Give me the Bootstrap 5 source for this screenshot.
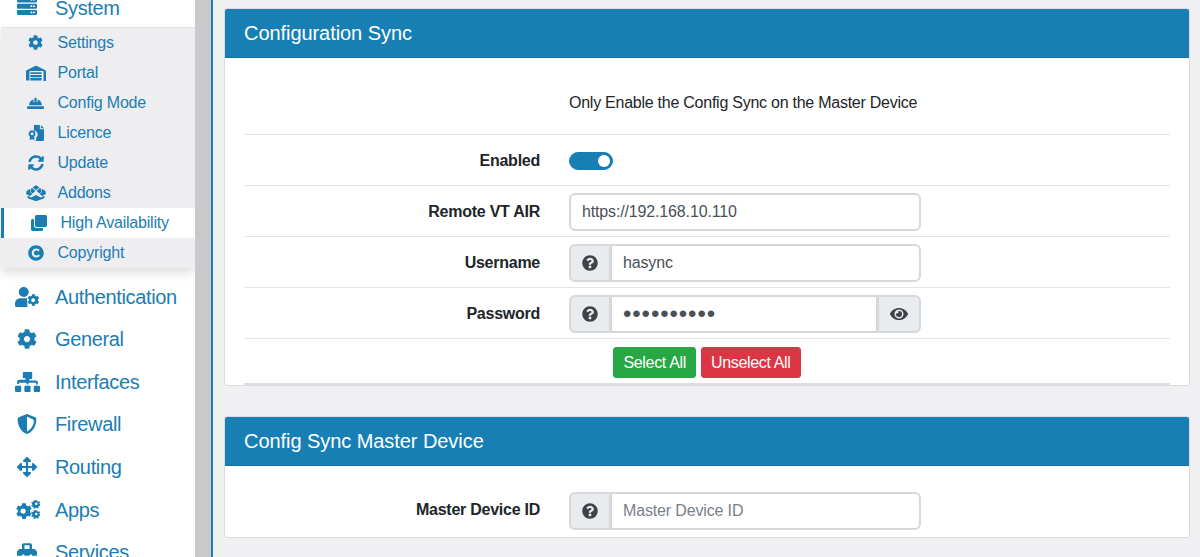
<!DOCTYPE html>
<html lang="en">
<head>
<meta charset="utf-8">
<title>Configuration Sync</title>
<link rel="stylesheet" href="https://cdn.jsdelivr.net/npm/bootstrap@5.3.0/dist/css/bootstrap.min.css">
<style>
html,body{height:557px;overflow:hidden}
body{font-family:"Liberation Sans",Arial,sans-serif;background:#f0f0f2;color:#212529}
.shell{height:557px;overflow:hidden}
.side{width:195px;flex:none;background:#fff;margin-top:-13px;height:570px}
.gutter{width:16px;flex:none;background:#c9c9cc}
.content{flex:1;min-width:0;border-left:2px solid #1b7db3;background:#f0f0f2;padding:8px 10px 0 11px}
.mainlink{height:42.6px;font-size:20px;color:#1b7db3;text-decoration:none;padding-left:14px;letter-spacing:-.35px}
.mainlink .ico{width:26px;margin-right:15px}
.ico{display:flex;align-items:center;justify-content:center;flex:none}
svg{fill:currentColor;display:block;flex:none}
.submenu{background:#eeeef0;margin:-3px 0 7.8px 1px;box-shadow:0 5px 10px rgba(0,0,0,.13);border-top:1px solid #e2e2e4}
.sublink{height:30px;font-size:16px;color:#1b7db3;text-decoration:none;padding-left:25px;letter-spacing:-.2px}
.sublink .ico{width:19px;margin-right:12.5px}
.sublink.active-item{background:#fff;border-left:3px solid #1b7db3;padding-left:25px}
.panel{border:1px solid #dcdcde;border-radius:3px;margin-bottom:30px}
.panel-head{background:#187fb5;color:#fff;font-size:20px;height:49px;padding:0 19px;border-bottom:1px solid #146c9c;border-radius:2px 2px 0 0;display:flex;align-items:center;letter-spacing:-.06px}
.panel-inner{padding:0 19px}
.form-line{border-bottom:1px solid #e4e4e6;height:51px;margin:0;padding-top:1px}
.form-line.tall{height:77px;padding-top:13px}
.form-line.btns{height:46px;border-bottom:2px solid #dedee0;padding-top:8px}
.form-line.last{height:71px;border-bottom:0;padding-top:26px;align-items:flex-start}
.lbl{width:296px;flex:none;font-weight:700;text-align:right;font-size:16px;letter-spacing:-.25px;margin-right:29px}
.last .lbl{line-height:36px}
.ctl{width:352px;flex:none}
.note{font-size:16px;letter-spacing:-.25px;padding-left:325px}
.form-control,.input-group-text{font-size:16px;height:38px;border-color:#d6d8db;border-width:2px;color:#495057;font-family:inherit}
.form-control{padding-left:11px;letter-spacing:-.15px}
.form-control::placeholder{color:#7a8087}
.input-group-text{background:#e9ecef;color:#3d4349;padding:0;width:42px;justify-content:center}
.input-group-text.wide{width:44px}
.form-control.dots{letter-spacing:.9px;font-size:24px;padding-top:0;padding-bottom:0}
.form-switch .form-check-input{width:44px;height:18px;margin:0;float:none;background-color:#187fb5;border-color:#187fb5}
.form-switch{padding:0;margin:0;min-height:0}
.act{font-size:16px;height:31px;padding:0 9px;line-height:29px;letter-spacing:-.33px;border-radius:3px}
.btnrow{gap:5px}
.btn-success{background:#28a745;border-color:#28a745}
.btn-danger{background:#dc3545;border-color:#dc3545}
</style>
</head>
<body>
<div class="shell d-flex">
<nav class="side">
  <a class="mainlink d-flex align-items-center" href="#"><span class="ico"><svg width="20" height="20" viewBox="0 48 512 512"><path d="M480 160H32c-17.673 0-32-14.327-32-32V64c0-17.673 14.327-32 32-32h448c17.673 0 32 14.327 32 32v64c0 17.673-14.327 32-32 32zm-48-88c-13.255 0-24 10.745-24 24s10.745 24 24 24 24-10.745 24-24-10.745-24-24-24zm-64 0c-13.255 0-24 10.745-24 24s10.745 24 24 24 24-10.745 24-24-10.745-24-24-24zm112 248H32c-17.673 0-32-14.327-32-32v-64c0-17.673 14.327-32 32-32h448c17.673 0 32 14.327 32 32v64c0 17.673-14.327 32-32 32zm-48-88c-13.255 0-24 10.745-24 24s10.745 24 24 24 24-10.745 24-24-10.745-24-24-24zm-64 0c-13.255 0-24 10.745-24 24s10.745 24 24 24 24-10.745 24-24-10.745-24-24-24zm112 248H32c-17.673 0-32-14.327-32-32v-64c0-17.673 14.327-32 32-32h448c17.673 0 32 14.327 32 32v64c0 17.673-14.327 32-32 32zm-48-88c-13.255 0-24 10.745-24 24s10.745 24 24 24 24-10.745 24-24-10.745-24-24-24zm-64 0c-13.255 0-24 10.745-24 24s10.745 24 24 24 24-10.745 24-24-10.745-24-24-24z"/></svg></span>System</a>
  <div class="submenu">
    <a class="sublink d-flex align-items-center" href="#"><span class="ico"><svg width="15" height="15" viewBox="0 0 512 512"><path d="M487.4 315.7l-42.6-24.6c4.3-23.2 4.3-47 0-70.2l42.6-24.6c4.9-2.8 7.1-8.6 5.5-14-11.1-35.6-30-67.8-54.7-94.6-3.8-4.1-10-5.1-14.8-2.3L380.8 110c-17.9-15.4-38.5-27.3-60.8-35.1V25.8c0-5.6-3.9-10.5-9.4-11.7-36.7-8.2-74.3-7.8-109.2 0-5.5 1.2-9.4 6.1-9.4 11.7V75c-22.2 7.9-42.8 19.8-60.8 35.1L88.7 85.5c-4.9-2.8-11-1.9-14.8 2.3-24.7 26.7-43.6 58.9-54.7 94.6-1.7 5.4.6 11.2 5.5 14L67.3 221c-4.3 23.2-4.3 47 0 70.2l-42.6 24.6c-4.9 2.8-7.1 8.6-5.5 14 11.1 35.6 30 67.8 54.7 94.6 3.8 4.1 10 5.1 14.8 2.3l42.6-24.6c17.9 15.4 38.5 27.3 60.8 35.1v49.2c0 5.6 3.9 10.5 9.4 11.7 36.7 8.2 74.3 7.8 109.2 0 5.5-1.2 9.4-6.1 9.4-11.7v-49.2c22.2-7.9 42.8-19.8 60.8-35.1l42.6 24.6c4.9 2.8 11 1.9 14.8-2.3 24.7-26.7 43.6-58.9 54.7-94.6 1.5-5.5-.7-11.3-5.6-14.1zM256 336c-44.1 0-80-35.9-80-80s35.9-80 80-80 80 35.9 80 80-35.9 80-80 80z"/></svg></span>Settings</a>
    <a class="sublink d-flex align-items-center" href="#"><span class="ico"><svg width="20" height="16" viewBox="0 0 640 512"><path d="M20 170 290 30q30-14 60 0l270 140q20 10 20 30v292q0 20-20 20h-60V210q0-20-20-20H130q-20 0-20 20v282H20q-20 0-20-20V200q0-20 20-30z"/><path d="M140 230h360v60H140zm0 90h360v60H140zm0 90h360v82H140z"/></svg></span>Portal</a>
    <a class="sublink d-flex align-items-center" href="#"><span class="ico"><svg width="17" height="14" viewBox="0 0 512 400"><path d="M64 270c0-90 50-160 130-185v95h30V60q0-16 16-16h32q16 0 16 16v120h30V85c80 25 130 95 130 185zM24 300h464q24 0 24 24v30q0 24-24 24H24q-24 0-24-24v-30q0-24 24-24z"/></svg></span>Config Mode</a>
    <a class="sublink d-flex align-items-center" href="#"><span class="ico"><svg width="16" height="16" viewBox="0 0 512 512"><path fill-rule="evenodd" d="M190 0h190v120q0 16 16 16h116v340q0 36-36 36H220q40-10 40-40v-70c30-25 50-60 50-100 0-70-50-120-120-130zM412 0l100 100H412zM130 170a110 110 0 0 1 70 195v120l-70-40-70 40V365a110 110 0 0 1 70-195zm0 60a50 50 0 1 0 0 100 50 50 0 0 0 0-100z"/></svg></span>Licence</a>
    <a class="sublink d-flex align-items-center" href="#"><span class="ico"><svg width="16" height="16" viewBox="0 0 512 512"><path d="M370.72 133.28C339.458 104.008 298.888 87.962 255.848 88c-77.458.068-144.328 53.178-162.791 126.85-1.344 5.363-6.122 9.15-11.651 9.15H24.103c-7.498 0-13.194-6.807-11.807-14.176C33.933 94.924 134.813 8 256 8c66.448 0 126.791 26.136 171.315 68.685L463.03 40.97C478.149 25.851 504 36.559 504 57.941V192c0 13.255-10.745 24-24 24H345.941c-21.382 0-32.09-25.851-16.971-40.971l41.75-41.749zM32 296h134.059c21.382 0 32.09 25.851 16.971 40.971l-41.75 41.75c31.262 29.273 71.835 45.319 114.876 45.28 77.418-.07 144.315-53.144 162.787-126.849 1.344-5.363 6.122-9.15 11.651-9.15h57.304c7.498 0 13.194 6.807 11.807 14.176C478.067 417.076 377.187 504 256 504c-66.448 0-126.791-26.136-171.315-68.685L48.97 471.03C33.851 486.149 8 475.441 8 454.059V320c0-13.255 10.745-24 24-24z"/></svg></span>Update</a>
    <a class="sublink d-flex align-items-center" href="#"><span class="ico"><svg width="20" height="16" viewBox="0 0 640 512"><path d="M320 170 210 70 320 10l110 60zM190 90l110 100-80 70-70-30 10-100zM450 90 340 190l80 70 70-30-10-100zM20 190l110-70 10 120 70 40-80 70L0 290zM620 190l-110-70-10 120-70 40 80 70 130-60zM50 340l120 60 150-80 150 80 120-60v80L340 510h-40L50 420z"/></svg></span>Addons</a>
    <a class="sublink active-item d-flex align-items-center" href="#"><span class="ico"><svg width="16" height="16" viewBox="0 0 512 512"><path d="M464 0c26.51 0 48 21.49 48 48v288c0 26.51-21.49 48-48 48H176c-26.51 0-48-21.49-48-48V48c0-26.51 21.49-48 48-48h288M176 416c-44.112 0-80-35.888-80-80V128H48c-26.51 0-48 21.49-48 48v288c0 26.51 21.49 48 48 48h288c26.51 0 48-21.49 48-48v-48H176z"/></svg></span>High Availability</a>
    <a class="sublink d-flex align-items-center" href="#"><span class="ico"><svg width="16" height="16" viewBox="0 0 512 512"><path d="M256 8C119.033 8 8 119.033 8 256s111.033 248 248 248 248-111.033 248-248S392.967 8 256 8zm117.134 346.753c-1.592 1.867-39.776 45.731-109.851 45.731-84.692 0-144.484-63.26-144.484-145.567 0-81.303 62.004-143.401 143.762-143.401 66.957 0 101.965 37.315 103.422 38.904a12 12 0 0 1 1.238 14.623l-22.38 34.655c-4.049 6.267-12.774 7.351-18.234 2.295-.233-.214-26.529-23.88-61.88-23.88-46.116 0-73.916 33.575-73.916 76.082 0 39.602 25.514 79.692 74.277 79.692 38.697 0 65.28-28.338 65.544-28.625 5.132-5.565 14.059-5.033 18.531 1.053l24.547 33.572a12.001 12.001 0 0 1-.576 14.866z"/></svg></span>Copyright</a>
  </div>
  <a class="mainlink d-flex align-items-center" href="#"><span class="ico"><svg width="25" height="20" viewBox="0 0 640 512"><path d="M224 256a128 128 0 1 0 0-256 128 128 0 0 0 0 256zM320 512H48q-48 0-48-48v-42c0-75 60-134 134-134h180c-10 40-6 70 6 98-10 40-10 80 0 126z"/><path d="M610 370l-26-15c3-14 3-28 0-42l26-15c4-2 5-6 4-9-7-21-18-41-33-56-2-3-6-3-9-2l-26 15c-11-9-23-16-36-21v-30c0-4-3-7-6-8-22-5-44-5-66 0-3 1-6 4-6 8v30c-13 5-25 12-36 21l-26-15c-3-1-7-1-9 2-15 15-26 35-33 56-1 3 0 7 4 9l26 15c-3 14-3 28 0 42l-26 15c-4 2-5 6-4 9 7 21 18 41 33 56 2 3 6 3 9 2l26-15c11 9 23 16 36 21v30c0 4 3 7 6 8 22 5 44 5 66 0 3-1 6-4 6-8v-30c13-5 25-12 36-21l26 15c3 1 7 1 9-2 15-15 26-35 33-56 1-3 0-7-4-9zM464 384a48 48 0 1 1 0-96 48 48 0 0 1 0 96z"/></svg></span>Authentication</a>
  <a class="mainlink d-flex align-items-center" href="#"><span class="ico"><svg width="20" height="20" viewBox="0 0 512 512"><path d="M487.4 315.7l-42.6-24.6c4.3-23.2 4.3-47 0-70.2l42.6-24.6c4.9-2.8 7.1-8.6 5.5-14-11.1-35.6-30-67.8-54.7-94.6-3.8-4.1-10-5.1-14.8-2.3L380.8 110c-17.9-15.4-38.5-27.3-60.8-35.1V25.8c0-5.6-3.9-10.5-9.4-11.7-36.7-8.2-74.3-7.8-109.2 0-5.5 1.2-9.4 6.1-9.4 11.7V75c-22.2 7.9-42.8 19.8-60.8 35.1L88.7 85.5c-4.9-2.8-11-1.9-14.8 2.3-24.7 26.7-43.6 58.9-54.7 94.6-1.7 5.4.6 11.2 5.5 14L67.3 221c-4.3 23.2-4.3 47 0 70.2l-42.6 24.6c-4.9 2.8-7.1 8.6-5.5 14 11.1 35.6 30 67.8 54.7 94.6 3.8 4.1 10 5.1 14.8 2.3l42.6-24.6c17.9 15.4 38.5 27.3 60.8 35.1v49.2c0 5.6 3.9 10.5 9.4 11.7 36.7 8.2 74.3 7.8 109.2 0 5.5-1.2 9.4-6.1 9.4-11.7v-49.2c22.2-7.9 42.8-19.8 60.8-35.1l42.6 24.6c4.9 2.8 11 1.9 14.8-2.3 24.7-26.7 43.6-58.9 54.7-94.6 1.5-5.5-.7-11.3-5.6-14.1zM256 336c-44.1 0-80-35.9-80-80s35.9-80 80-80 80 35.9 80 80-35.9 80-80 80z"/></svg></span>General</a>
  <a class="mainlink d-flex align-items-center" href="#"><span class="ico"><svg width="25" height="20" viewBox="0 0 640 512"><path d="M128 352H32c-18 0-32 14-32 32v96c0 18 14 32 32 32h96c18 0 32-14 32-32v-96c0-18-14-32-32-32zm-24-80h192v48h48v-48h192v48h48v-57c0-26-21-47-47-47H368v-40h40c18 0 32-14 32-32V32c0-18-14-32-32-32H232c-18 0-32 14-32 32v96c0 18 14 32 32 32h40v40H103c-26 0-47 21-47 47v57h48zm264 80h-96c-18 0-32 14-32 32v96c0 18 14 32 32 32h96c18 0 32-14 32-32v-96c0-18-14-32-32-32zm240 0h-96c-18 0-32 14-32 32v96c0 18 14 32 32 32h96c18 0 32-14 32-32v-96c0-18-14-32-32-32z"/></svg></span>Interfaces</a>
  <a class="mainlink d-flex align-items-center" href="#"><span class="ico"><svg width="20" height="20" viewBox="0 0 512 512"><path fill-rule="evenodd" d="M466.5 83.7l-192-80a48.15 48.15 0 0 0-36.9 0l-192 80C27.7 91.1 16 108.6 16 128c0 198.5 114.5 335.7 221.5 380.3 11.8 4.9 25.1 4.9 36.9 0C360.1 472.6 496 349.3 496 128c0-19.4-11.7-36.9-29.5-44.3zM256 64v382c90-44 180-150 176-290z"/></svg></span>Firewall</a>
  <a class="mainlink d-flex align-items-center" href="#"><span class="ico"><svg width="20" height="20" viewBox="0 0 512 512"><path d="M352.201 425.775l-79.196 79.196c-9.373 9.373-24.568 9.373-33.941 0l-79.196-79.196c-15.119-15.119-4.411-40.971 16.971-40.97h51.162L228 284H127.196v51.162c0 21.382-25.851 32.09-40.971 16.971L7.029 272.937c-9.373-9.373-9.373-24.569 0-33.941L86.225 159.8c15.119-15.119 40.971-4.411 40.971 16.971V228H228V127.196h-51.23c-21.382 0-32.09-25.851-16.971-40.971l79.196-79.196c9.373-9.373 24.568-9.373 33.941 0l79.196 79.196c15.119 15.119 4.411 40.971-16.971 40.971h-51.162V228h100.804v-51.162c0-21.382 25.851-32.09 40.97-16.971l79.196 79.196c9.373 9.373 9.373 24.569 0 33.941L425.773 352.2c-15.119 15.119-40.971 4.411-40.97-16.971V284H284v100.804h51.23c21.382 0 32.09 25.851 16.971 40.971z"/></svg></span>Routing</a>
  <a class="mainlink d-flex align-items-center" href="#"><span class="ico"><svg width="25" height="20" viewBox="0 0 640 512"><path fill-rule="evenodd" d="M390 310l-32-18c3-17 3-35 0-52l32-18c4-2 5-6 4-10-8-26-22-50-41-70-3-3-7-4-11-2l-32 18c-13-11-28-20-45-26V96c0-4-3-8-7-9-27-6-55-6-81 0-4 1-7 5-7 9v36c-17 6-32 15-45 26l-32-18c-4-2-8-1-11 2-19 20-33 44-41 70-1 4 0 8 4 10l32 18c-3 17-3 35 0 52l-32 18c-4 2-5 6-4 10 8 26 22 50 41 70 3 3 7 4 11 2l32-18c13 11 28 20 45 26v36c0 4 3 8 7 9 27 6 55 6 81 0 4-1 7-5 7-9v-36c17-6 32-15 45-26l32 18c4 2 8 1 11-2 19-20 33-44 41-70 1-4 0-8-4-10zM198 326a60 60 0 1 1 0-120 60 60 0 0 1 0 120z" transform="translate(-10 -10) scale(1.1)"/><path id="cg" fill-rule="evenodd" d="M528 10h40l6 28 22 10 26-14 22 30-20 20 4 24 26 12-10 38-30-2-14 20 10 28-34 18-20-22-24 2-14 26-38-12 2-30-18-14-30 6-12-36 24-16 0-26-24-16 12-36 30 6 18-14-2-30zM548 70a32 32 0 1 0 0 64 32 32 0 0 0 0-64z" transform="translate(-14 -6) scale(1.02)"/><use href="#cg" y="258"/></svg></span>Apps</a>
  <a class="mainlink d-flex align-items-center" href="#"><span class="ico"><svg width="20" height="20" viewBox="0 0 512 512"><path d="M502 230l-45-45c-6-6-14-9-23-9h-50V80c0-26-22-48-48-48H176c-26 0-48 22-48 48v96H78c-9 0-17 3-23 9l-45 45c-6 6-10 14-10 23v99h128v-16c0-9 7-16 16-16h32c9 0 16 7 16 16v16h128v-16c0-9 7-16 16-16h32c9 0 16 7 16 16v16h128v-99c0-9-4-17-10-23zM320 176H192V80h128zm64 240c0 9-7 16-16 16h-32c-9 0-16-7-16-16v-16H192v16c0 9-7 16-16 16h-32c-9 0-16-7-16-16v-16H0v64c0 18 14 32 32 32h448c18 0 32-14 32-32v-64H384z"/></svg></span>Services</a>
</nav>
<div class="gutter"></div>
<main class="content">
  <section class="card panel">
    <div class="panel-head">Configuration Sync</div>
    <div class="panel-inner">
      <div class="form-line tall d-flex align-items-center"><div class="note">Only Enable the Config Sync on the Master Device</div></div>
      <div class="form-line d-flex align-items-center">
        <label class="lbl" for="en">Enabled</label>
        <div class="form-check form-switch"><input class="form-check-input d-block" id="en" type="checkbox" checked></div>
      </div>
      <div class="form-line d-flex align-items-center">
        <label class="lbl" for="rem">Remote VT AIR</label>
        <div class="ctl"><input class="form-control" id="rem" value="https://192.168.10.110"></div>
      </div>
      <div class="form-line d-flex align-items-center">
        <label class="lbl" for="usr">Username</label>
        <div class="ctl input-group"><span class="input-group-text"><svg width="16" height="16" viewBox="0 0 512 512"><use href="#qm"/></svg></span><input class="form-control" id="usr" value="hasync"></div>
      </div>
      <div class="form-line d-flex align-items-center">
        <label class="lbl" for="pw">Password</label>
        <div class="ctl input-group"><span class="input-group-text"><svg width="16" height="16" viewBox="0 0 512 512"><path id="qm" d="M504 256c0 136.997-111.043 248-248 248S8 392.997 8 256C8 119.083 119.043 8 256 8s248 111.083 248 248zM262.655 90c-54.497 0-89.255 22.957-116.549 63.758-3.536 5.286-2.353 12.415 2.715 16.258l34.699 26.31c5.205 3.947 12.621 3.008 16.665-2.122 17.864-22.658 30.113-35.797 57.303-35.797 20.429 0 45.698 13.148 45.698 32.958 0 14.976-12.363 22.667-32.534 33.976C247.128 238.528 216 254.941 216 296v4c0 6.627 5.373 12 12 12h56c6.627 0 12-5.373 12-12v-1.333c0-28.462 83.186-29.647 83.186-106.667 0-58.002-60.165-102-116.531-102zM256 338c-25.365 0-46 20.635-46 46 0 25.364 20.635 46 46 46s46-20.636 46-46c0-25.365-20.635-46-46-46z"/></svg></span><input class="form-control dots" id="pw" type="password" value="hasyncpass"><span class="input-group-text wide"><svg width="18" height="16" viewBox="0 0 576 512"><path d="M572.52 241.4C518.29 135.59 410.93 64 288 64S57.68 135.64 3.48 241.41a32.35 32.35 0 0 0 0 29.19C57.71 376.41 165.07 448 288 448s230.32-71.64 284.52-177.41a32.35 32.35 0 0 0 0-29.19zM288 400a144 144 0 1 1 144-144 143.93 143.93 0 0 1-144 144zm0-240a95.31 95.31 0 0 0-25.31 3.79 47.85 47.85 0 0 1-66.9 66.9A95.78 95.78 0 1 0 288 160z"/></svg></span></div>
      </div>
      <div class="form-line btns btnrow d-flex justify-content-center align-items-start">
        <button type="button" class="btn btn-success act">Select All</button>
        <button type="button" class="btn btn-danger act">Unselect All</button>
      </div>
    </div>
  </section>
  <section class="card panel">
    <div class="panel-head">Config Sync Master Device</div>
    <div class="panel-inner">
      <div class="form-line last d-flex">
        <label class="lbl" for="mid">Master Device ID</label>
        <div class="ctl input-group"><span class="input-group-text"><svg width="16" height="16" viewBox="0 0 512 512"><use href="#qm"/></svg></span><input class="form-control" id="mid" placeholder="Master Device ID"></div>
      </div>
    </div>
  </section>
</main>
</div>
<script src="https://cdn.jsdelivr.net/npm/bootstrap@5.3.0/dist/js/bootstrap.bundle.min.js"></script>
</body>
</html>
